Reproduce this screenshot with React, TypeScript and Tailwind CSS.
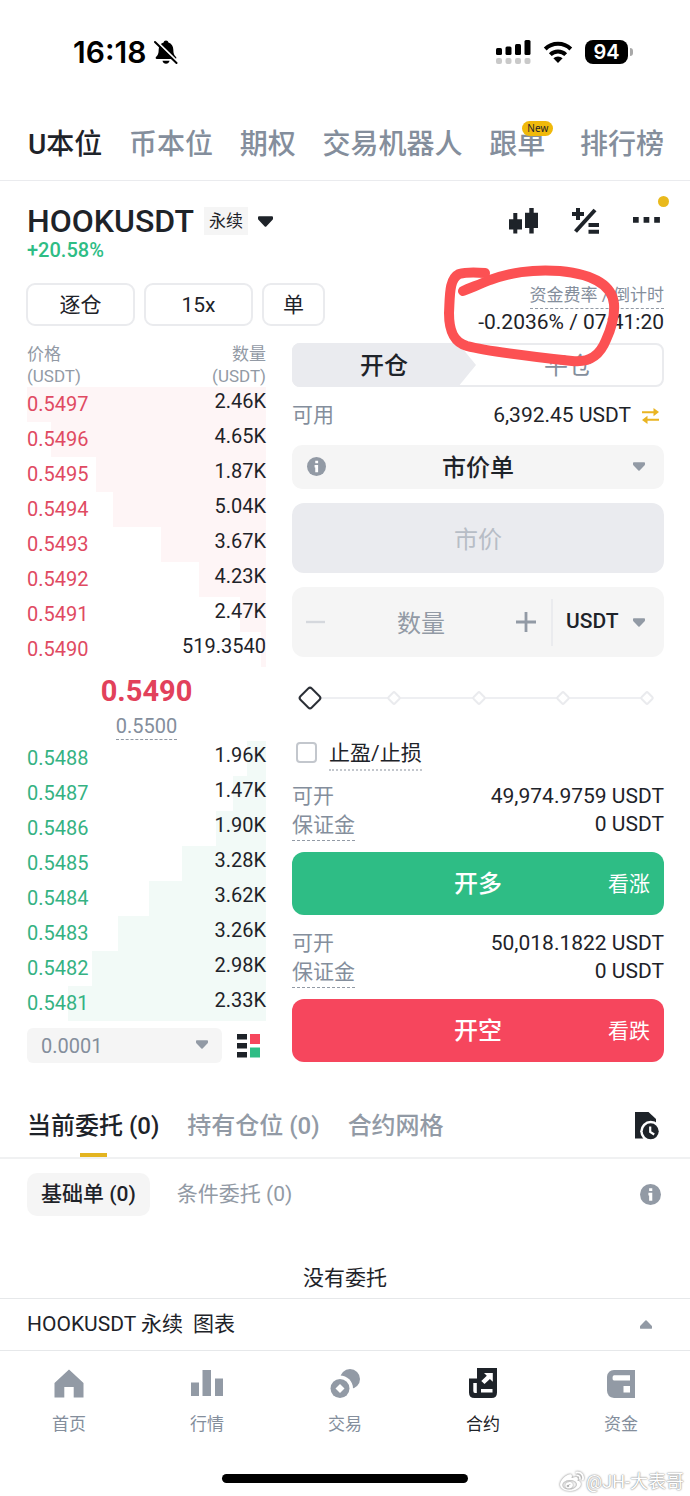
import { useState } from "react";
import { FaWeibo } from "react-icons/fa";

type Row = { price: string; size: string; depth: number };

const asks: Row[] = [
    { price: "0.5497", size: "2.46K", depth: 100 },
    { price: "0.5496", size: "4.65K", depth: 90 },
    { price: "0.5495", size: "1.87K", depth: 71 },
    { price: "0.5494", size: "5.04K", depth: 64 },
    { price: "0.5493", size: "3.67K", depth: 44 },
    { price: "0.5492", size: "4.23K", depth: 28 },
    { price: "0.5491", size: "2.47K", depth: 11 },
    { price: "0.5490", size: "519.3540", depth: 2 },
];

const bids: Row[] = [
    { price: "0.5488", size: "1.96K", depth: 8 },
    { price: "0.5487", size: "1.47K", depth: 14 },
    { price: "0.5486", size: "1.90K", depth: 21 },
    { price: "0.5485", size: "3.28K", depth: 35 },
    { price: "0.5484", size: "3.62K", depth: 49 },
    { price: "0.5483", size: "3.26K", depth: 62 },
    { price: "0.5482", size: "2.98K", depth: 73 },
    { price: "0.5481", size: "2.33K", depth: 83 },
];

function Caret({ className }: { className: string }) {
    return (
        <svg viewBox="0 0 14 10" className={className} fill="currentColor" aria-hidden="true">
            <path d="M1 0h12q1 0 1 1v1.500q0 .5-.4.9L7.700 9.600q-.7.700-1.400 0L.4 3.400Q0 3 0 2.500V1Q0 0 1 0z" />
        </svg>
    );
}

function InfoIcon({ className }: { className: string }) {
    return (
        <svg viewBox="0 0 20 20" className={className} aria-hidden="true">
            <circle cx="10" cy="10" r="10" fill="#929aa5" />
            <path d="M8.700 4h3v2.600h-3zM8 8.400h3.700V16H8.700v-5H8z" fill="#fff" />
        </svg>
    );
}

function StatusBar() {
    return (
        <div className="flex h-[105px] items-start justify-between pt-8 pr-[57px] pl-[73px] text-black">
            <div className="flex h-10 items-center gap-2">
                <span className="text-[30px] font-semibold [font-family:Inter,sans-serif]">16:18</span>
                <svg viewBox="0 0 24 26" className="h-[26px] w-6" aria-hidden="true">
                    <path
                        d="M12 1.500c1.300 0 2.200.8 2.400 1.900 3.200 1 4.900 3.700 4.900 7.100 0 4.200 1 6 2.700 7.600.6.700.5 1.900-.8 1.900H2.800c-1.300 0-1.400-1.200-.8-1.900 1.700-1.600 2.700-3.400 2.700-7.600 0-3.400 1.700-6.100 4.900-7.100C9.800 2.300 10.700 1.500 12 1.500z"
                        fill="#000"
                    />
                    <path d="M8.500 21.700h7c-.4 1.900-1.700 3-3.500 3s-3.100-1.100-3.500-3z" fill="#000" />
                    <path d="M2.500 2.300l21 20.500" stroke="#fff" strokeWidth="2.200" />
                    <path d="M1 3l21.500 21" stroke="#000" strokeWidth="2" strokeLinecap="round" />
                </svg>
            </div>
            <div className="flex h-10 items-center gap-3">
                <svg viewBox="0 0 35 26" className="h-[26px] w-[35px]" aria-hidden="true">
                    <rect x="0" y="9" width="6" height="7" rx="1.500" />
                    <rect x="9.500" y="7.500" width="6" height="8.500" rx="1.500" />
                    <rect x="19" y="5" width="6" height="11" rx="1.500" />
                    <rect x="28.500" y="1" width="6" height="15" rx="1.500" />
                    <g fill="#c9c9c9">
                        <rect x="0" y="19" width="6" height="6" rx="2" />
                        <rect x="9.500" y="19" width="6" height="6" rx="2" />
                        <rect x="19" y="19" width="6" height="6" rx="2" />
                        <rect x="28.500" y="19" width="6" height="6" rx="2" />
                    </g>
                </svg>
                <svg viewBox="0 0 30 24" className="h-6 w-[30px]" aria-hidden="true">
                    <path d="M2.200 9a18.500 18.500 0 0 1 25.600 0" fill="none" stroke="#000" strokeWidth="4" />
                    <path d="M7.300 14.600a11 11 0 0 1 15.400 0" fill="none" stroke="#000" strokeWidth="4" />
                    <path d="M15 23l-4.600-4.800a6.800 6.800 0 0 1 9.200 0z" />
                </svg>
                <div className="flex items-center">
                    <div className="flex h-6 w-[43px] items-center justify-center rounded-lg bg-black text-xl font-semibold text-white [font-family:Inter,sans-serif]">
                        94
                    </div>
                    <div className="ml-0.5 h-2 w-[3px] rounded-r-full bg-[#a8a8a8]" />
                </div>
            </div>
        </div>
    );
}

function TopTabs() {
    return (
        <nav className="flex h-[76px] items-center justify-between border-b border-[#eaebee] px-[26px] pt-1 pl-7 text-[28px] leading-10 font-medium text-[#848e9c]">
            <a href="#u" className="text-[#1e2329]">U本位</a>
            <a href="#coin">币本位</a>
            <a href="#options">期权</a>
            <a href="#bots">交易机器人</a>
            <a href="#copy" className="relative pr-2">
                跟单
                <span className="absolute -top-1 right-0 rounded-full bg-[#f0b90b] px-[5px] text-[10px] leading-[15px] font-normal text-[#1e2329] [font-family:'Noto_Sans',sans-serif]">
                    New
                </span>
            </a>
            <a href="#rank">排行榜</a>
        </nav>
    );
}

function PairHeader() {
    return (
        <header className="flex items-start justify-between pt-5 pr-[30px] pl-[27px] text-[#1e2329]">
            <div>
                <div className="flex h-10 items-center">
                    <h1 className="text-[32px] font-medium">HOOKUSDT</h1>
                    <span className="ml-2.5 bg-[#f5f5f5] px-[5px] text-[17px] leading-7">永续</span>
                    <button aria-label="选择合约" className="ml-2.5">
                        <Caret className="h-[11px] w-[15px]" />
                    </button>
                </div>
                <p className="text-xl leading-[18px] font-medium text-[#2ebd85]">+20.58%</p>
            </div>
            <div className="flex h-10 items-center gap-[34px]">
                <button aria-label="K线">
                    <svg viewBox="0 0 29 26" className="h-[26px] w-[29px]" fill="currentColor">
                        <path d="M4.300 5h4v6.300H13v10.200H8.300v4h-4v-4H0V11.300h4.300z" />
                        <path d="M20.300 0h4.400v4.700H29V20h-4.300v5.500h-4.400V20H16V4.700h4.300z" />
                    </svg>
                </button>
                <button aria-label="计算器">
                    <svg viewBox="0 0 27 26" className="h-[26px] w-[27px]" fill="currentColor">
                        <path d="M4 0h4v4h4v4H8v4H4V8H0V4h4z" />
                        <path d="M23 2L3.500 23.500" stroke="currentColor" strokeWidth="4" />
                        <path d="M16.500 15H27v4H16.500zM16.500 21.700H27v4H16.500z" />
                    </svg>
                </button>
                <button aria-label="更多" className="relative">
                    <svg viewBox="0 0 27 26" className="h-[26px] w-[27px]" fill="currentColor">
                        <path d="M0 9h5.700v5.700H0zM10.600 9h5.700v5.700h-5.700zM21.200 9h5.700v5.700h-5.700z" />
                    </svg>
                    <span className="absolute -top-3 -right-[9px] size-[11px] rounded-full bg-[#e9b91c]" />
                </button>
            </div>
        </header>
    );
}

function MarginRow() {
    const btn = "h-[43px] rounded-[9px] border-2 border-[#eaebee] pt-0.5 text-[21px]";
    return (
        <div className="mt-6 flex items-start justify-between px-[26px] text-[#1e2329]">
            <div className="flex gap-[9px]">
                <button className={`${btn} w-[109px]`}>逐仓</button>
                <button className={`${btn} w-[109px]`}>15x</button>
                <button className={`${btn} w-[63px]`}>单</button>
            </div>
            <div className="relative flex flex-col items-end">
                <span className="border-b border-dashed border-[#929aa5] text-[17px] leading-[25px] text-[#848e9c]">
                    资金费率 / 倒计时
                </span>
                <span className="text-[21px] leading-[26px]">-0.2036% / 07:41:20</span>
                {/* hand-drawn marker around the funding rate */}
                <svg
                    viewBox="440 260 190 115"
                    className="pointer-events-none absolute -top-6 right-[34px] z-10 h-[115px] w-[190px] max-w-none"
                    aria-hidden="true"
                >
                    <path
                        d="M485 274C474 273 466 273 459 275C449 280 450 296 449 314C449 331 453 343 467 347C490 353 535 358 572 362C590 364 600 356 606 341C612 328 615 318 614 305C612 284 590 275 560 272C530 270 510 274 490 281C478 286 470 289 463 292"
                        fill="none"
                        stroke="#fc5153"
                        strokeWidth="10"
                        strokeLinecap="round"
                        strokeLinejoin="round"
                    />
                </svg>
            </div>
        </div>
    );
}

function BookRows({ rows, side }: { rows: Row[]; side: "ask" | "bid" }) {
    const fill = side === "ask" ? "#fef5f6" : "#f2faf7";
    return (
        <tbody>
            {rows.map((r) => (
                <tr
                    key={r.price}
                    style={{ background: `linear-gradient(to left, ${fill} ${r.depth}%, transparent ${r.depth}%)` }}
                >
                    <td
                        className={`h-[35px] p-0 align-top leading-[35px] ${
                            side === "ask" ? "text-[#e04a62]" : "text-[#35b283]"
                        }`}
                    >
                        {r.price}
                    </td>
                    <td className="h-[35px] p-0 text-right align-top leading-[29px]">{r.size}</td>
                </tr>
            ))}
        </tbody>
    );
}

function OrderBook() {
    return (
        <section className="w-[239px] shrink-0 text-xl text-[#1e2329]">
            <table className="w-full">
                <thead>
                    <tr className="text-[17px] leading-[22px] text-[#929aa5]">
                        <th className="p-0 text-left font-normal">价格<br />(USDT)</th>
                        <th className="p-0 text-right font-normal">数量<br />(USDT)</th>
                    </tr>
                </thead>
                <BookRows rows={asks} side="ask" />
            </table>
            <div className="flex flex-col items-center pt-1.5 pb-px">
                <span className="text-[29px] leading-9 font-bold text-[#e2415b]">0.5490</span>
                <span className="border-b border-dashed border-[#929aa5] pt-1 leading-[26px] text-[#848e9c]">0.5500</span>
            </div>
            <table className="w-full">
                <BookRows rows={bids} side="bid" />
            </table>
            <div className="mt-[7px] flex items-center justify-between">
                <div className="relative w-[195px]">
                    <select
                        aria-label="价格精度"
                        className="h-[35px] w-full appearance-none rounded-md bg-[#f5f5f5] pl-3.5 text-[#848e9c]"
                    >
                        <option>0.0001</option>
                    </select>
                    <Caret className="pointer-events-none absolute top-3 right-[14px] h-[9px] w-3 text-[#929aa5]" />
                </div>
                <button aria-label="盘口样式" className="mr-1.5">
                    <svg viewBox="0 0 23 24" className="h-6 w-[23px]">
                        <path d="M0 0h10v5.500H0zM0 9h10v5.500H0zM0 18h10v5.500H0z" fill="#1e2329" />
                        <path d="M13 0h10v10H13z" fill="#f6465d" />
                        <path d="M13 13.500h10v10H13z" fill="#2ebd85" />
                    </svg>
                </button>
            </div>
        </section>
    );
}

function LeverageSlider() {
    const [value, setValue] = useState(0);
    return (
        <div className="relative mt-[27px] flex h-7 items-center justify-between px-[3px] pl-1">
            <div className="absolute inset-x-[17px] top-[13px] h-0.5 bg-[#eeeff2]" />
            <svg viewBox="0 0 28 28" className="relative size-7" aria-hidden="true">
                <rect x="6" y="6" width="16" height="16" rx="2.500" transform="rotate(45 14 14)" fill="#fff" stroke="#2b2f36" strokeWidth="2" />
            </svg>
            {[25, 50, 75, 100].map((n) => (
                <svg key={n} viewBox="0 0 28 28" className="relative size-7" aria-hidden="true">
                    <rect x="9.500" y="9.500" width="9" height="9" rx="1.500" transform="rotate(45 14 14)" fill="#fff" stroke="#eaebee" strokeWidth="2" />
                </svg>
            ))}
            <input
                type="range"
                aria-label="仓位比例"
                min={0}
                max={100}
                step={25}
                value={value}
                onChange={(e) => setValue(Number(e.target.value))}
                className="absolute inset-0 w-full opacity-0"
            />
        </div>
    );
}

function Limits({ max }: { max: string }) {
    return (
        <div className="flex justify-between text-[21px] leading-7">
            <div className="text-[#848e9c]">
                <div>可开</div>
                <span className="inline-block border-b border-dashed border-[#929aa5] leading-[30px]">保证金</span>
            </div>
            <div className="text-right">
                <div>{max} USDT</div>
                <div>0 USDT</div>
            </div>
        </div>
    );
}

function OrderForm() {
    const submit = "relative h-[63px] w-full rounded-xl text-2xl font-medium text-white";
    return (
        <section className="min-w-0 flex-1 text-[#1e2329]">
            <div className="flex h-11 rounded-lg border-2 border-[#eaebee] text-2xl">
                <button className="-my-0.5 -ml-0.5 w-1/2 rounded-l-lg bg-[#eaebef] pt-0.5 font-medium [clip-path:polygon(0_0,calc(100%-18px)_0,100%_50%,calc(100%-18px)_100%,0_100%)]">
                    开仓
                </button>
                <button className="w-1/2 pt-0.5 text-[#848e9c]">平仓</button>
            </div>
            <div className="mt-[15px] flex h-7 items-center text-[21px]">
                <span className="mr-auto text-[#848e9c]">可用</span>
                <span>6,392.45 USDT</span>
                <button aria-label="划转" className="mr-[5px] ml-[11px]">
                    <svg viewBox="0 0 17 16" className="h-4 w-[17px]" fill="#e9b422">
                        <path d="M0 3.200h11.500V0L17 4.100l-5.500 4.100V5.200H0zM17 12.800H5.500V16L0 11.900l5.500-4.100v3H17z" />
                    </svg>
                </button>
            </div>
            <div className="relative mt-[15px]">
                <select
                    aria-label="委托类型"
                    className="h-11 w-full appearance-none rounded-[10px] bg-[#f5f5f5] pt-0.5 text-2xl font-medium [text-align-last:center]"
                >
                    <option>市价单</option>
                </select>
                <InfoIcon className="pointer-events-none absolute top-3 left-[15px] size-[19px]" />
                <Caret className="pointer-events-none absolute top-[17px] right-[19px] h-[9px] w-3 text-[#929aa5]" />
            </div>
            <input
                aria-label="价格"
                disabled
                placeholder="市价"
                className="mt-3.5 block h-[70px] w-full rounded-xl bg-[#eaebef] pt-1 text-center text-2xl placeholder:text-[#b7bdc6]"
            />
            <div className="mt-3.5 flex h-[70px] items-center rounded-xl bg-[#f5f5f5]">
                <button aria-label="减少" className="ml-3.5">
                    <svg viewBox="0 0 20 20" className="size-5" fill="#d5d8dd">
                        <path d="M0 8.800h19v2.400H0z" />
                    </svg>
                </button>
                <input
                    aria-label="数量"
                    placeholder="数量"
                    className="w-0 min-w-0 flex-1 bg-transparent pt-1 text-center text-2xl placeholder:text-[#929aa5]"
                />
                <button aria-label="增加" className="mr-[15px]">
                    <svg viewBox="0 0 20 20" className="size-5" fill="#929aa5">
                        <path d="M8.600 0h2.800v8.600H20v2.800h-8.600V20H8.600v-8.600H0V8.600h8.600z" />
                    </svg>
                </button>
                <div className="relative border-l-2 border-[#eaebee]">
                    <select
                        aria-label="数量单位"
                        className="h-[47px] w-[111px] appearance-none bg-transparent pl-[13px] text-[21px] font-medium"
                    >
                        <option>USDT</option>
                    </select>
                    <Caret className="pointer-events-none absolute top-[19px] right-[19px] h-[9px] w-3 text-[#929aa5]" />
                </div>
            </div>
            <LeverageSlider />
            <label className="mt-[26px] flex h-8 items-center gap-3 pl-1 text-[21px]">
                <input type="checkbox" className="mb-1 size-[21px] appearance-none rounded border-2 border-[#c3c7cd] bg-white" />
                <span className="border-b-2 border-dotted border-[#c3c7cd] leading-[31px]">止盈/止损</span>
            </label>
            <div className="mt-3">
                <Limits max="49,974.9759" />
                <button className={`${submit} mt-[11px] bg-[#2ebd85]`}>
                    开多
                    <span className="absolute inset-y-0 right-3.5 flex items-center text-[21px] font-normal">看涨</span>
                </button>
            </div>
            <div className="mt-3.5">
                <Limits max="50,018.1822" />
                <button className={`${submit} mt-[11px] bg-[#f6465d]`}>
                    开空
                    <span className="absolute inset-y-0 right-3.5 flex items-center text-[21px] font-normal">看跌</span>
                </button>
            </div>
        </section>
    );
}

function Orders() {
    return (
        <section className="text-[#1e2329]">
            <div className="mt-[31px] flex h-[65px] items-stretch gap-7 border-b-2 border-[#f0f1f2] pr-[31px] pl-[27px] text-2xl font-medium text-[#929aa5]">
                <button className="relative text-[#1e2329]">
                    当前委托 (0)
                    <span className="absolute inset-x-0 bottom-0 mx-auto h-1 w-[27px] bg-[#e3b420]" />
                </button>
                <button>持有仓位 (0)</button>
                <button>合约网格</button>
                <button aria-label="历史委托" className="ml-auto">
                    <svg viewBox="0 0 24 28" className="h-7 w-6">
                        <path d="M0 0h13.500L21 7v19.500H0z" fill="#1e2329" />
                        <circle cx="15.700" cy="19.300" r="10.500" fill="#fff" />
                        <circle cx="15.700" cy="19.300" r="8" fill="#1e2329" />
                        <path d="M15.200 14.500V20l4 2.500" fill="none" stroke="#fff" strokeWidth="2.200" />
                    </svg>
                </button>
            </div>
            <div className="mt-3.5 flex h-[43px] items-center pr-[29px] pl-[27px] text-[21px]">
                <button className="h-full rounded-[10px] bg-[#f5f5f5] px-3.5 font-medium">基础单 (0)</button>
                <button className="ml-[27px] text-[#929aa5]">条件委托 (0)</button>
                <button aria-label="说明" className="ml-auto">
                    <InfoIcon className="size-[21px]" />
                </button>
            </div>
            <p className="mt-[47px] h-[35px] text-center text-[21px] leading-[30px]">没有委托</p>
            <button className="flex h-[53px] w-full items-center border-y border-[#e6e8ea] pr-[38px] pl-[27px] text-[21px]">
                <span className="mr-2.5">HOOKUSDT 永续</span>
                <span>图表</span>
                <Caret className="ml-auto h-[9px] w-3 rotate-180 text-[#929aa5]" />
            </button>
        </section>
    );
}

function BottomNav() {
    const item = "flex flex-1 flex-col items-center gap-3";
    const icon = "h-[30px] w-8";
    return (
        <nav className="flex pt-[17px] text-[17px] leading-7 text-[#848e9c]">
            <a href="#home" className={item}>
                <svg viewBox="0 0 32 30" className={icon} fill="#929aa5">
                    <path d="M16 1.500L30.500 15v14.500h-9.800V19h-9.400v10.500H1.500V15z" />
                </svg>
                首页
            </a>
            <a href="#market" className={item}>
                <svg viewBox="0 0 32 30" className={icon} fill="#929aa5">
                    <path d="M0 14.500h8V28H0zM11.500 2H20v26h-8.500zM24 10.500h8V28h-8z" />
                </svg>
                行情
            </a>
            <a href="#trade" className={item}>
                <svg viewBox="0 0 32 30" className={icon}>
                    <circle cx="21" cy="11" r="10" fill="#929aa5" />
                    <circle cx="11" cy="20.500" r="13" fill="#fff" />
                    <circle cx="11" cy="20.500" r="9.500" fill="#929aa5" />
                    <path d="M11 16l4.500 4.500L11 25l-4.500-4.500z" fill="#fff" />
                </svg>
                交易
            </a>
            <a href="#futures" className={`${item} text-[#1e2329]`}>
                <svg viewBox="0 0 32 30" className={icon}>
                    <path d="M10 0h20v24.500q0 5.500-5.500 5.500h-17Q2 30 2 24.500V10.500h8z" fill="#1e2329" />
                    <path d="M6.300 15h3.500v10H8q-1.700 0-1.700-2zM14 21h11.500v3.500H14z" fill="#fff" />
                    <path d="M17 5h8.800v8.800l-2.900-2.900-5.400 5.200-3.200-3.100 5.500-5.200z" fill="#fff" />
                </svg>
                合约
            </a>
            <a href="#assets" className={item}>
                <svg viewBox="0 0 32 30" className={icon}>
                    <path d="M9 2h21v28H9q-7-1-7-7.500V8.500Q3 2 9 2z" fill="#929aa5" />
                    <path d="M9 7.300h16v5.200H9q-1.500 0-1.500-2.600T9 7.300zM18.500 18H25v6.500h-6.500z" fill="#fff" />
                </svg>
                资金
            </a>
        </nav>
    );
}

export default function App() {
    return (
        <div className="relative w-full bg-white [font-family:Roboto,'Noto_Sans_CJK_SC',sans-serif]">
            <StatusBar />
            <TopTabs />
            <PairHeader />
            <MarginRow />
            <main className="mt-2 flex justify-between gap-[26px] pr-[26px] pl-[27px]">
                <OrderBook />
                <OrderForm />
            </main>
            <Orders />
            <BottomNav />
            <div className="mt-9 h-6">
                <div className="mx-auto h-[9px] w-[246px] rounded-full bg-black" />
            </div>
            <div className="absolute right-1.5 bottom-1 flex items-center gap-0.5 text-[18px] leading-6 text-white [text-shadow:0_0_2px_#8a8a8a,0_0_1px_#8a8a8a]">
                <FaWeibo className="size-6 text-white drop-shadow-[0_0_1px_#777]" />
                @JH-大表哥
            </div>
        </div>
    );
}
